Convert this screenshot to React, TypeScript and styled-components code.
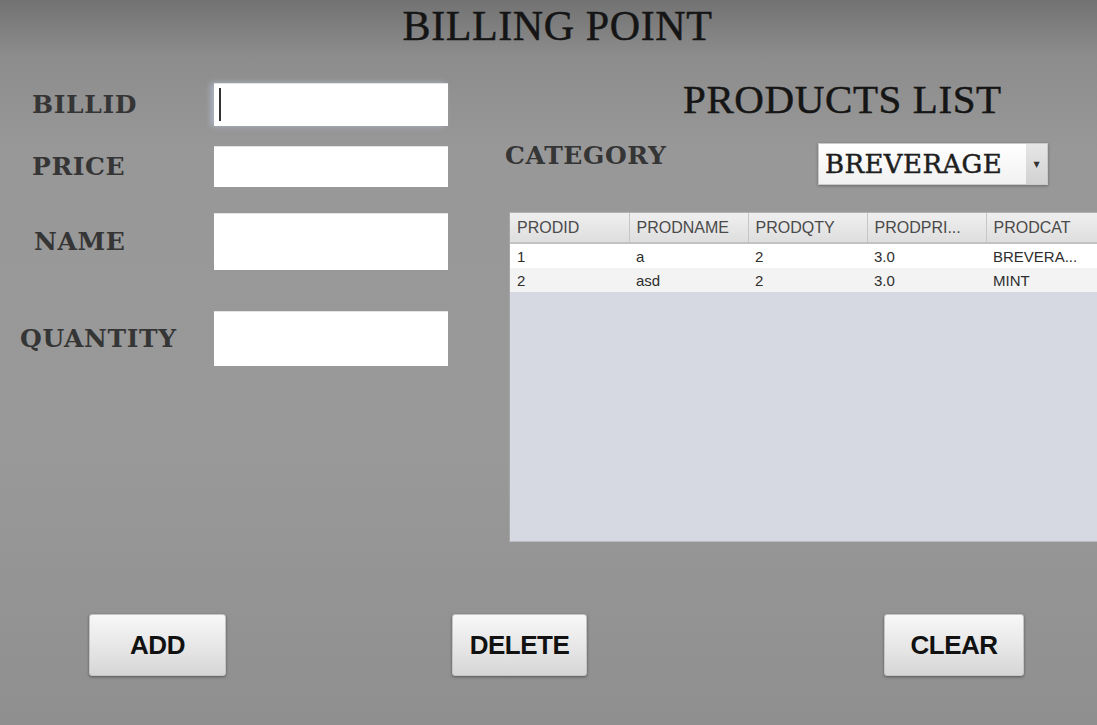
import styled, { createGlobalStyle } from 'styled-components';

const GlobalStyle = createGlobalStyle`
  html, body {
    margin: 0;
    padding: 0;
  }
  body {
    font-family: 'Liberation Serif', serif;
  }
`;

const Page = styled.div`
  width: 1097px;
  height: 725px;
  overflow: hidden;
  display: flex;
  flex-direction: column;
  background: linear-gradient(
    to bottom,
    #727272 0px,
    #8c8c8c 55px,
    #989898 150px,
    #999999 450px,
    #8f8f8f 725px
  );
`;

const Header = styled.div`
  height: 70px;
  box-sizing: border-box;
  padding: 3px 0 0 18px;
  display: flex;
  justify-content: center;
`;

const Title = styled.h1`
  margin: 0;
  font-family: 'Liberation Serif', serif;
  font-weight: normal;
  font-size: 42px;
  line-height: 46px;
  color: #151515;
  letter-spacing: 0.6px;
  -webkit-text-stroke: 0.5px #151515;
`;

const Main = styled.div`
  flex: 1;
  display: flex;
`;

const FormColumn = styled.div`
  flex-shrink: 0;
  width: 505px;
  padding-top: 13px;
  display: flex;
  flex-direction: column;
`;

const FieldRow = styled.div<{ $height: number; $space: number }>`
  display: flex;
  align-items: center;
  height: ${(p) => p.$height}px;
  margin-top: ${(p) => p.$space}px;
`;

const Label = styled.label<{ $indent: number }>`
  width: 214px;
  box-sizing: border-box;
  padding-left: ${(p) => p.$indent}px;
  font-family: 'DejaVu Serif', serif;
  font-weight: bold;
  font-size: 25px;
  line-height: 30px;
  letter-spacing: 0.6px;
  color: #353535;
`;

const FieldBox = styled.div`
  position: relative;
  width: 234px;
  height: 100%;
`;

const TextInput = styled.input<{ $focused?: boolean }>`
  width: 100%;
  height: 100%;
  box-sizing: border-box;
  border: none;
  border-top: 1px solid #e4e4e4;
  outline: none;
  background: #ffffff;
  box-shadow: ${(p) =>
    p.$focused ? '-3px 0 6px rgba(175, 185, 205, 0.9)' : 'none'};
  font-family: 'Liberation Sans', sans-serif;
  font-size: 18px;
  padding: 0 6px;
`;

const Caret = styled.span`
  position: absolute;
  left: 5px;
  top: 5px;
  bottom: 5px;
  width: 2px;
  background: #333333;
`;

const ProductsPanel = styled.div`
  flex: 1;
  min-width: 0;
  display: flex;
  flex-direction: column;
`;

const PanelTitle = styled.h2`
  margin: 6px 0 0 178px;
  font-family: 'Liberation Serif', serif;
  font-weight: normal;
  font-size: 41px;
  line-height: 46px;
  letter-spacing: 0.6px;
  color: #151515;
  -webkit-text-stroke: 0.5px #151515;
`;

const CategoryRow = styled.div`
  margin-top: 19px;
  height: 44px;
  display: flex;
  align-items: flex-start;
  justify-content: space-between;
  padding-right: 49px;
`;

const CategoryLabel = styled.span`
  font-family: 'DejaVu Serif', serif;
  font-weight: bold;
  font-size: 25px;
  line-height: 30px;
  color: #353535;
  letter-spacing: 0.6px;
`;

const Select = styled.div`
  margin-top: 2px;
  width: 230px;
  height: 42px;
  box-sizing: border-box;
  display: flex;
  border: 1px solid #c9c9c9;
  background: linear-gradient(to bottom, #ffffff, #f1f1f1);
  box-shadow: 0 1px 3px rgba(0, 0, 0, 0.3);
`;

const SelectValue = styled.span`
  flex: 1;
  padding-left: 6px;
  font-family: 'DejaVu Serif', serif;
  font-size: 26px;
  line-height: 40px;
  letter-spacing: 0.4px;
  color: #1e1e1e;
  -webkit-text-stroke: 0.5px #1e1e1e;
`;

const SelectArrow = styled.span`
  width: 21px;
  display: flex;
  align-items: center;
  justify-content: center;
  background: linear-gradient(to bottom, #e6e6e6, #d2d2d2);
  font-family: 'DejaVu Sans', sans-serif;
  font-size: 8px;
  color: #333333;
`;

const TableArea = styled.div`
  margin: 27px 0 0 4px;
  height: 330px;
  width: 600px;
  flex-shrink: 0;
  box-sizing: border-box;
  border-top: 1px solid #b0b0b0;
  border-left: 1px solid #a6a6a6;
  border-bottom: 1px solid #b9bcc4;
  background: #d6d9e1;
`;

const Grid = styled.table`
  border-collapse: collapse;
  table-layout: fixed;
  width: 595px;
  font-family: 'Liberation Sans', sans-serif;
`;

const HeadCell = styled.th`
  width: 119px;
  height: 30px;
  padding: 0 0 0 7px;
  box-sizing: border-box;
  text-align: left;
  font-weight: normal;
  font-size: 16px;
  color: #4a4a4a;
  white-space: nowrap;
  overflow: hidden;
  background: linear-gradient(to bottom, #efefef, #dedede);
  border-right: 1px solid #c6c6c6;
  border-bottom: 2px solid #c2c2c2;
`;

const BodyRow = styled.tr<{ $shade: boolean }>`
  background: ${(p) => (p.$shade ? '#f3f3f3' : '#ffffff')};
`;

const Cell = styled.td`
  height: 24px;
  padding: 0 0 0 7px;
  font-size: 15px;
  color: #2e2e2e;
  white-space: nowrap;
  overflow: hidden;
`;

const Footer = styled.div`
  height: 111px;
  display: flex;
  align-items: flex-start;
  padding-left: 89px;
`;

const ActionButton = styled.button<{ $width: number; $offset: number }>`
  width: ${(p) => p.$width}px;
  height: 62px;
  margin-left: ${(p) => p.$offset}px;
  border: 1px solid #c4c4c4;
  border-radius: 3px;
  background: linear-gradient(to bottom, #f7f7f7, #e6e6e6 55%, #d6d6d6);
  box-shadow: 0 1px 3px rgba(0, 0, 0, 0.4);
  font-family: 'Liberation Sans Narrow', 'Liberation Sans', sans-serif;
  font-weight: bold;
  font-size: 26px;
  letter-spacing: -0.5px;
  color: #111111;
  cursor: pointer;
`;

const columns = ['PRODID', 'PRODNAME', 'PRODQTY', 'PRODPRI...', 'PRODCAT'];

const products = [
  { id: '1', name: 'a', qty: '2', price: '3.0', cat: 'BREVERA...' },
  { id: '2', name: 'asd', qty: '2', price: '3.0', cat: 'MINT' },
];

const fields = [
  { label: 'BILLID', indent: 32, height: 43, space: 0 },
  { label: 'PRICE', indent: 32, height: 41, space: 20 },
  { label: 'NAME', indent: 34, height: 57, space: 26 },
  { label: 'QUANTITY', indent: 20, height: 55, space: 41 },
];

export default function App() {
  return (
    <>
      <GlobalStyle />
      <Page>
        <Header>
          <Title>BILLING POINT</Title>
        </Header>
        <Main>
          <FormColumn>
            {fields.map((f, i) => (
              <FieldRow key={f.label} $height={f.height} $space={f.space}>
                <Label $indent={f.indent}>{f.label}</Label>
                <FieldBox>
                  <TextInput $focused={i === 0} />
                  {i === 0 && <Caret />}
                </FieldBox>
              </FieldRow>
            ))}
          </FormColumn>
          <ProductsPanel>
            <PanelTitle>PRODUCTS LIST</PanelTitle>
            <CategoryRow>
              <CategoryLabel>CATEGORY</CategoryLabel>
              <Select>
                <SelectValue>BREVERAGE</SelectValue>
                <SelectArrow>▼</SelectArrow>
              </Select>
            </CategoryRow>
            <TableArea>
              <Grid>
                <thead>
                  <tr>
                    {columns.map((c) => (
                      <HeadCell key={c}>{c}</HeadCell>
                    ))}
                  </tr>
                </thead>
                <tbody>
                  {products.map((p, i) => (
                    <BodyRow key={p.id} $shade={i % 2 === 1}>
                      <Cell>{p.id}</Cell>
                      <Cell>{p.name}</Cell>
                      <Cell>{p.qty}</Cell>
                      <Cell>{p.price}</Cell>
                      <Cell>{p.cat}</Cell>
                    </BodyRow>
                  ))}
                </tbody>
              </Grid>
            </TableArea>
          </ProductsPanel>
        </Main>
        <Footer>
          <ActionButton $width={137} $offset={0}>ADD</ActionButton>
          <ActionButton $width={135} $offset={226}>DELETE</ActionButton>
          <ActionButton $width={140} $offset={297}>CLEAR</ActionButton>
        </Footer>
      </Page>
    </>
  );
}
